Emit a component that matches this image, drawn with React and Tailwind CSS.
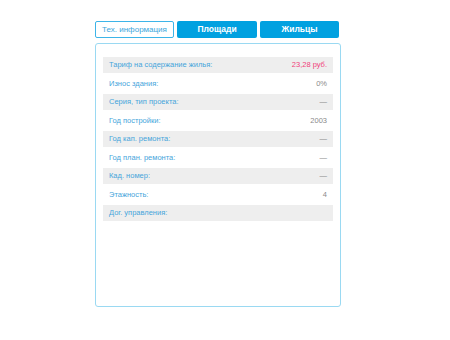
export default function App() {
  const rows = [
    { label: "Тариф на содержание жилья:", value: "23,28 руб.", red: true },
    { label: "Износ здания:", value: "0%" },
    { label: "Серия, тип проекта:", value: "—" },
    { label: "Год постройки:", value: "2003" },
    { label: "Год кап. ремонта:", value: "—" },
    { label: "Год план. ремонта:", value: "—" },
    { label: "Кад. номер:", value: "—" },
    { label: "Этажность:", value: "4" },
    { label: "Дог. управления:", value: "" },
  ];

  return (
    <div className="w-[450px] h-[340px] bg-white font-['Liberation_Sans',Arial,sans-serif]">
      <div className="pl-[95px] pt-[21px] w-[341px] box-content">
        <div className="flex gap-[3px] h-[17px]">
          <button className="w-[79px] h-full border border-[#3db4e8] rounded-[2px] bg-white text-[#3aa6dc] text-[8px] leading-none whitespace-nowrap">
            Тех. информация
          </button>
          <button className="w-[80px] h-full rounded-[2px] bg-[#01a1e0] text-white font-bold text-[8.5px] leading-none">
            Площади
          </button>
          <button className="w-[79px] h-full rounded-[2px] bg-[#01a1e0] text-white font-bold text-[8.5px] leading-none">
            Жильцы
          </button>
        </div>

        <div className="mt-[5px] w-[246px] h-[264px] border border-[#9ad9f2] rounded-[3px] pt-[13px] px-[7px]">
          <div className="flex flex-col gap-[2.5px]">
            {rows.map((r, i) => (
              <div
                key={i}
                className={`h-4 flex items-center justify-between px-[6px] text-[7.5px] ${i % 2 === 0 ? "bg-[#eeeeee]" : ""}`}
              >
                <span className="text-[#45a5db]">{r.label}</span>
                <span className={r.red ? "text-[#f0427a]" : "text-[#8a8a8a]"}>{r.value}</span>
              </div>
            ))}
          </div>
        </div>
      </div>
    </div>
  );
}
